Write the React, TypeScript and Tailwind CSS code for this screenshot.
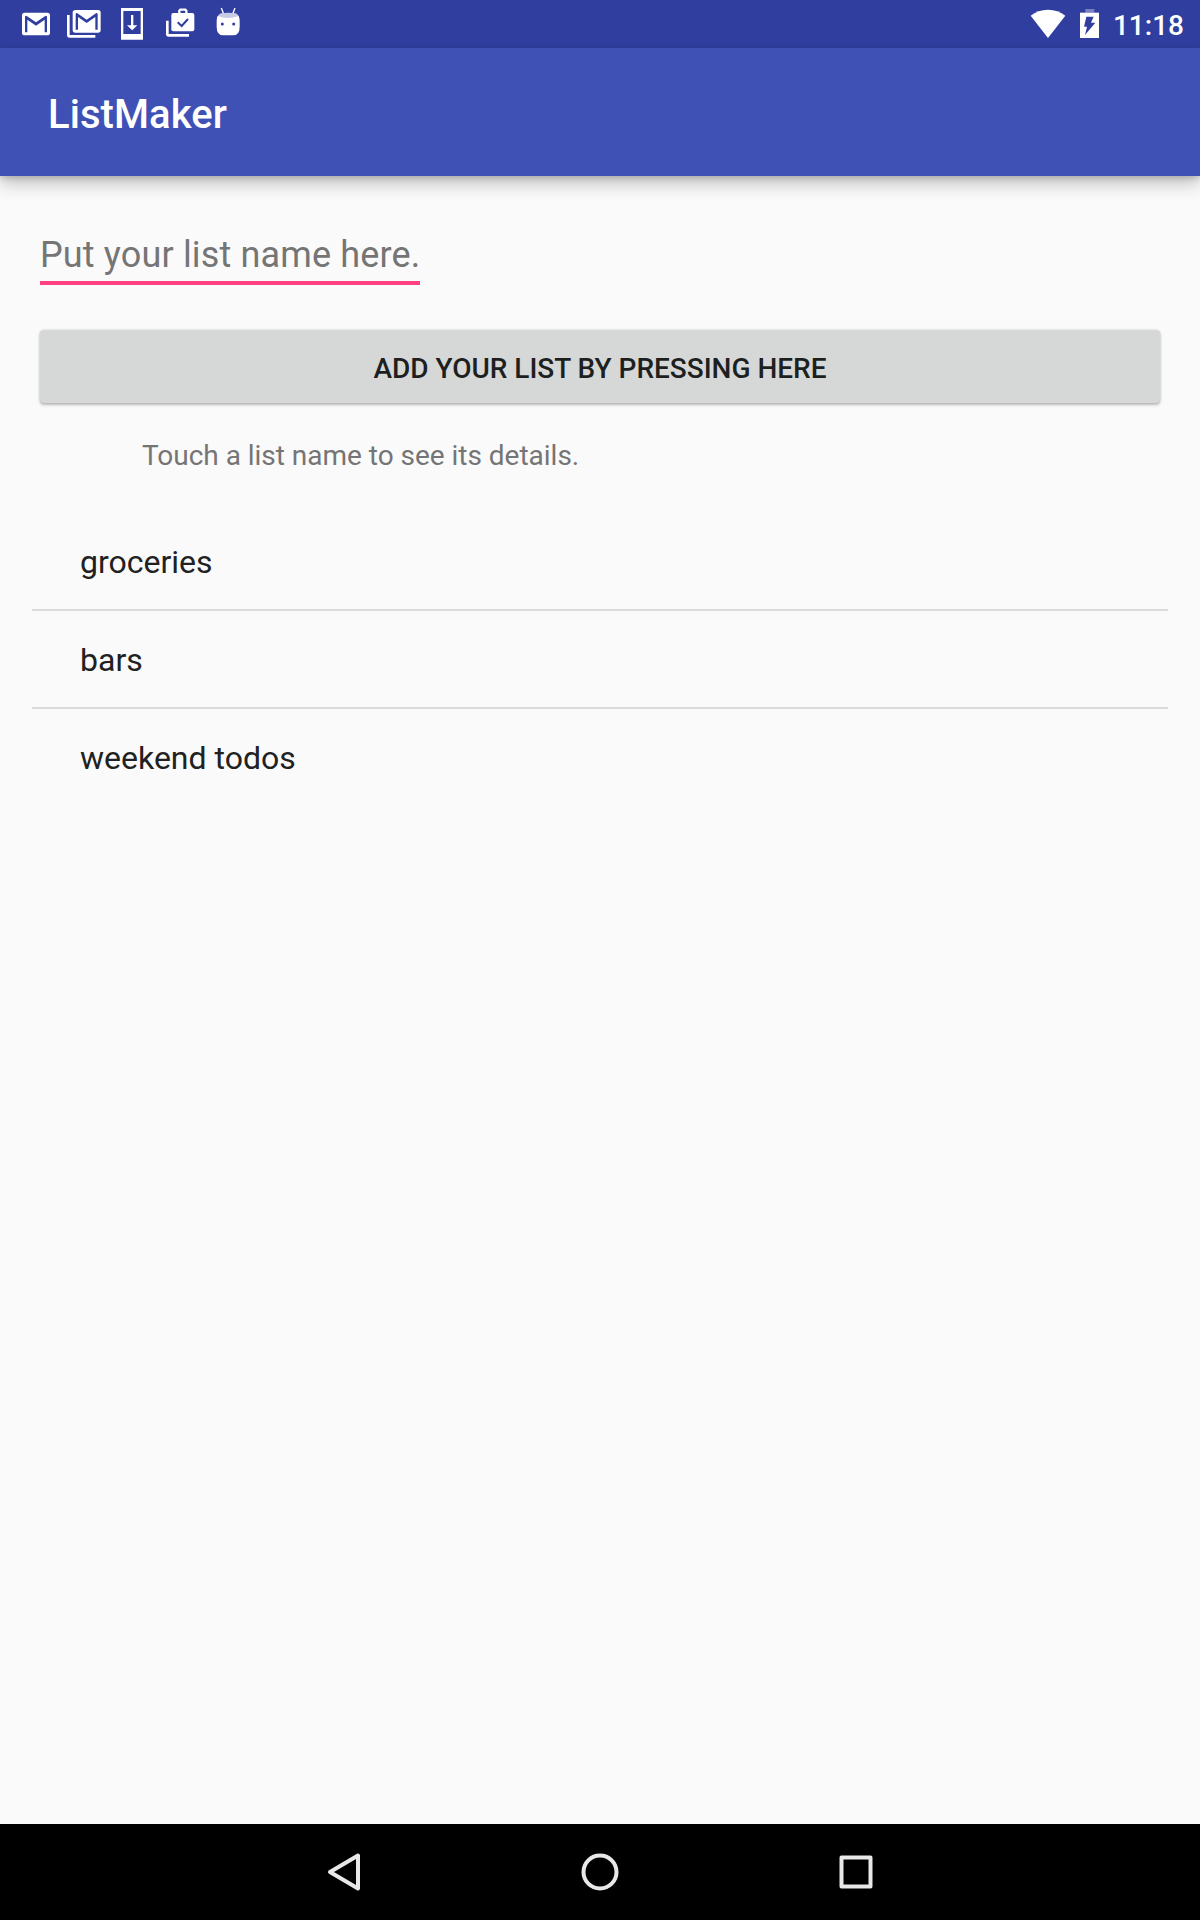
import React from "react";

const BAR = "#303F9F";

function StatusIcon({ x, children }: { x: number; children: React.ReactNode }) {
  // Drawn on a grid three times finer than the 48px slot.
  return (
    <svg className="h-12 w-12" viewBox={`${x} 0 144 144`} fill="#fff">
      {children}
    </svg>
  );
}

function Envelope() {
  return (
    <>
      <rect x="66" y="38" width="84" height="68" rx="8" />
      <path d="M75 97V50q0-3 4-3L108 67L137 47q4 0 4 3V97H134V59L108 77L82 59V97Z" fill={BAR} />
    </>
  );
}

function StatusBar() {
  return (
    <header className="flex h-12 items-center justify-between bg-[#303F9F] pl-3 pr-4">
      <div className="flex">
        <StatusIcon x={36}>
          <Envelope />
        </StatusIcon>
        <StatusIcon x={180}>
          <path d="M201 45H209V105H286V113H209q-8 0-8-8Z" />
          <g transform="translate(152 -8)">
            <Envelope />
          </g>
        </StatusIcon>
        <StatusIcon x={324}>
          <path fillRule="evenodd" d="M363 24H429V119H363ZM370 33V102H422V33Z" />
          <path d="M393 45H400V76H412L396.500 91L381 76H393Z" />
        </StatusIcon>
        <StatusIcon x={468}>
          <path d="M498 62H506V102H567V110H506q-8 0-8-8Z" />
          <path d="M538 41V32l3-3H556l3 3V41" fill="none" stroke="#fff" strokeWidth="7" />
          <rect x="514" y="39" width="69" height="55" rx="6" />
          <path d="M533 67L545 78L564 57" fill="none" stroke={BAR} strokeWidth="6" />
        </StatusIcon>
        <StatusIcon x={612}>
          <path d="M664 24L671 42M705 24L698 42" stroke="#fff" strokeWidth="4" />
          <path d="M652 52q2-8 10-12q23-4 46 0q8 4 9 12v8h-65Z" fill="#C7CBE6" />
          <path d="M653 48q31 12 63 0q3 6 3 18v14q0 26-20 26h-29q-20 0-20-26v-14q0-12 3-18Z" />
          <circle cx="667" cy="72" r="4.500" fill={BAR} />
          <circle cx="701" cy="72" r="4.500" fill={BAR} />
        </StatusIcon>
      </div>
      <div className="flex items-center">
        <svg className="mr-[14px] h-12 w-[36px]" viewBox="90 0 108 144" fill="#fff">
          <path d="M92 47Q114 29 144 29T196 47L144 114Z" />
        </svg>
        <svg className="mr-[14px] h-12 w-[19px]" viewBox="240 0 57 144" fill="#fff">
          <path d="M256 27H283V38H256Z" opacity="0.35" />
          <path d="M240 38H297V114H240Z" />
          <path d="M259 50H281L273 68H286L255 105L261 80H252Z" fill={BAR} />
        </svg>
        <span className="mt-[4px] text-[28px] font-medium leading-8 text-white">11:18</span>
      </div>
    </header>
  );
}

const lists = ["groceries", "bars", "weekend todos"];

export default function App() {
  return (
    <div className="flex h-[1920px] w-[1200px] flex-col bg-[#FAFAFA] font-['Roboto',sans-serif] text-[#212121]">
      <StatusBar />
      <div className="flex h-32 items-center bg-[#3F51B5] pl-12 pt-[6px] shadow-[0_8px_16px_rgba(0,0,0,0.22),0_2px_6px_rgba(0,0,0,0.16)]">
        <h1 className="text-[40px] font-medium leading-[48px] tracking-[0.08px] text-white">ListMaker</h1>
      </div>
      <main className="flex flex-1 flex-col px-8 pt-[55px]">
        <div className="ml-2 flex h-[54px] w-[380px] items-start whitespace-nowrap border-b-4 border-[#FF4081] text-[36px] leading-[48px] tracking-[0.15px] text-[#757575]">
          Put your list name here.
        </div>
        <button className="mx-2 mt-[45px] h-[73px] rounded-[4px] bg-[#D6D8D7] pt-[4px] text-[28px] font-medium leading-8 tracking-[-0.02px] text-[#1E1F1F] shadow-[0_2px_3px_rgba(0,0,0,0.24),0_0_3px_rgba(0,0,0,0.14)]">
          ADD YOUR LIST BY PRESSING HERE
        </button>
        <p className="ml-[110px] mt-[37px] text-[28px] leading-8 tracking-[-0.02px] text-[#757575]">
          Touch a list name to see its details.
        </p>
        <ul className="mt-[41px] divide-y-2 divide-[#DBDBDB]">
          {lists.map((name) => (
            <li
              key={name}
              className="flex h-[98px] items-center pl-12 pt-[2px] text-[32px] leading-10 last:pb-[2px]"
            >
              {name}
            </li>
          ))}
        </ul>
      </main>
      <nav className="flex h-24 items-center justify-center gap-[208px] bg-black">
        <svg className="h-12 w-12" viewBox="0 0 48 48" fill="none" stroke="#E8E8E8" strokeWidth="4" strokeLinejoin="round">
          <path d="M38 7.500V40.500L10 24Z" />
        </svg>
        <svg className="h-12 w-12" viewBox="0 0 48 48" fill="none" stroke="#E8E8E8" strokeWidth="4">
          <circle cx="24" cy="24" r="16.500" />
        </svg>
        <svg className="h-12 w-12" viewBox="0 0 48 48" fill="none" stroke="#E8E8E8" strokeWidth="4" strokeLinejoin="round">
          <rect x="9.500" y="9.500" width="29" height="29" />
        </svg>
      </nav>
    </div>
  );
}
